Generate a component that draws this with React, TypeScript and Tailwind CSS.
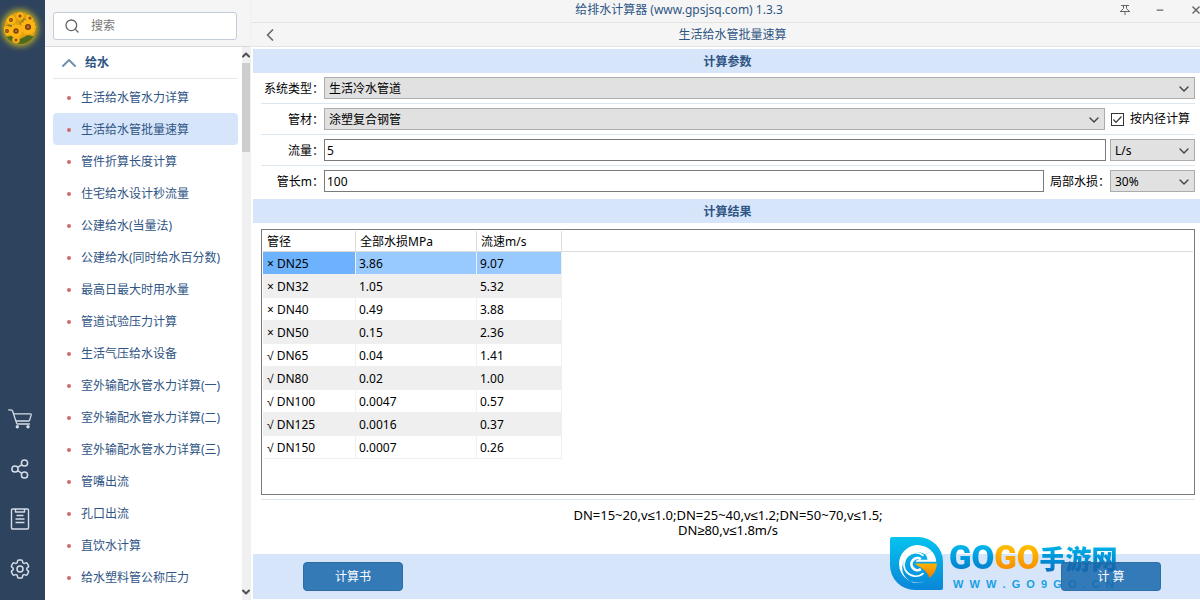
import { useState, type ReactNode } from 'react';
import { ChevronDown, ChevronLeft, ChevronUp, Minus, Search, X } from 'lucide-react';
import { HiOutlineCog6Tooth } from 'react-icons/hi2';
import clsx from 'clsx';

const menuItems = [
  '生活给水管水力详算',
  '生活给水管批量速算',
  '管件折算长度计算',
  '住宅给水设计秒流量',
  '公建给水(当量法)',
  '公建给水(同时给水百分数)',
  '最高日最大时用水量',
  '管道试验压力计算',
  '生活气压给水设备',
  '室外输配水管水力详算(一)',
  '室外输配水管水力详算(二)',
  '室外输配水管水力详算(三)',
  '管嘴出流',
  '孔口出流',
  '直饮水计算',
  '给水塑料管公称压力',
];

const results = [
  { ok: false, dn: 'DN25', loss: '3.86', speed: '9.07' },
  { ok: false, dn: 'DN32', loss: '1.05', speed: '5.32' },
  { ok: false, dn: 'DN40', loss: '0.49', speed: '3.88' },
  { ok: false, dn: 'DN50', loss: '0.15', speed: '2.36' },
  { ok: true, dn: 'DN65', loss: '0.04', speed: '1.41' },
  { ok: true, dn: 'DN80', loss: '0.02', speed: '1.00' },
  { ok: true, dn: 'DN100', loss: '0.0047', speed: '0.57' },
  { ok: true, dn: 'DN125', loss: '0.0016', speed: '0.37' },
  { ok: true, dn: 'DN150', loss: '0.0007', speed: '0.26' },
];

function Sunflower({ x, y, r }: { x: number; y: number; r: number }) {
  return (
    <g transform={`translate(${x} ${y})`}>
      {[0, 30, 60, 90, 120, 150].map((a) => (
        <ellipse key={a} rx={r} ry={r / 3} fill="#fcb514" transform={`rotate(${a})`} />
      ))}
      <circle r={r * 0.38} fill="#7a3f0c" />
      <circle r={r * 0.18} fill="#b8742a" />
    </g>
  );
}

function Avatar() {
  return (
    <div className="size-8 rounded-full shadow-[0_0_6px_2px_#c9b81e]">
      <svg viewBox="0 0 32 32" className="size-8 rounded-full">
        <rect width="32" height="32" fill="#e0a012" />
        <path d="M0 25 L8 24 L16 27 L24 23 L32 25 V32 H0 Z" fill="#4f6a1c" />
        <path d="M12 7 L16 11 L20 6 L24 11 L18 14 Z M2 14 L7 11 L9 15 Z" fill="#8a7a18" />
        <Sunflower x={7} y={8} r={5} />
        <Sunflower x={16} y={4} r={4} />
        <Sunflower x={26} y={6} r={4} />
        <Sunflower x={3} y={19} r={5} />
        <Sunflower x={12} y={19} r={7} />
        <Sunflower x={24} y={15} r={8} />
        <Sunflower x={12} y={28} r={4} />
      </svg>
    </div>
  );
}

function CartIcon() {
  return (
    <svg width="24" height="20" viewBox="0 0 24 20" fill="none" stroke="currentColor" strokeWidth="1.3" strokeLinecap="round" strokeLinejoin="round">
      <path d="M0.7 0.8 L3.6 1.2 Q4.4 1.4 4.7 2.3 L8.6 14.2 Q8.9 15 9.8 15 H21.5 M5.6 4.8 H22.4 Q23.5 4.8 23.2 5.9 L21.6 11.2 Q21.3 12 20.4 12 H8.3" />
      <circle cx="9.3" cy="17.8" r="1.7" fill="currentColor" stroke="none" />
      <circle cx="20" cy="17.8" r="1.7" fill="currentColor" stroke="none" />
    </svg>
  );
}

function ShareIcon() {
  return (
    <svg width="18" height="20" viewBox="0 0 18 20" fill="none" stroke="currentColor" strokeWidth="1.5">
      <circle cx="4" cy="10" r="3.1" />
      <circle cx="13.5" cy="4" r="3.1" />
      <circle cx="13.5" cy="16" r="3.1" />
      <path d="M6.7 8.3 L10.9 5.7 M6.7 11.7 L10.9 14.3" />
    </svg>
  );
}

function ReportIcon() {
  return (
    <svg width="20" height="22" viewBox="0 0 20 22" fill="none" stroke="currentColor" strokeWidth="1.4" strokeLinejoin="round">
      <rect x="1.5" y="1" width="17" height="20" rx="1" />
      <path d="M5.5 1 V4 H14.5 V1 M6.5 7.5 H13.5 M5.5 11 H14.5 M5.5 14.5 H14.5" />
    </svg>
  );
}

function PinIcon() {
  return (
    <svg width="10" height="10" viewBox="0 0 10 10" fill="none" stroke="currentColor">
      <path d="M1 0.5 H9 M3.5 0.5 V3.5 L1 6 M6.5 0.5 V3.5 L9 6 M0 6.5 H10 M5 6.5 V10" />
    </svg>
  );
}

function Rail() {
  return (
    <aside className="flex w-[45px] shrink-0 flex-col justify-between bg-[#2e435e] pt-3 pb-[6px] text-[#d6dde6]">
      <div className="pl-1">
        <Avatar />
      </div>
      <div className="flex w-10 flex-col">
        <button aria-label="购物车" className="flex h-[50px] items-center justify-center"><CartIcon /></button>
        <button aria-label="分享" className="flex h-[50px] items-center justify-center"><ShareIcon /></button>
        <button aria-label="计算书" className="flex h-[50px] items-center justify-center"><ReportIcon /></button>
        <button aria-label="设置" className="flex h-[50px] items-center justify-center"><HiOutlineCog6Tooth className="size-6" /></button>
      </div>
    </aside>
  );
}

function Sidebar() {
  const [active, setActive] = useState(1);

  return (
    <nav className="flex w-[205px] shrink-0 flex-col bg-white text-[#2f5584]">
      <div className="h-[47px] shrink-0 border-b border-[#d9d9d9] bg-[#f5f5f5] pt-3 pr-[13px] pl-2">
        <label className="flex h-7 items-center rounded-[3px] border border-[#c3ccd8] bg-white pl-[10px]">
          <Search className="size-4 text-[#666]" strokeWidth={2} />
          <input type="text" aria-label="搜索" placeholder="搜索" className="ml-[11px] w-24 outline-none placeholder:text-[#777]" />
        </label>
      </div>
      <div className="flex min-h-0 flex-1">
        <div className="min-w-0 flex-1 overflow-hidden pl-2">
          <button className="flex h-8 w-[185px] items-center gap-1 border-b border-[#e8e8e8] pl-1 font-bold">
            <ChevronUp className="size-6 text-[#7391ab]" strokeWidth={2} />
            给水
          </button>
          <ul className="w-[185px] pt-[2px]">
            {menuItems.map((item, i) => (
              <li key={item}>
                <a
                  href="#"
                  onClick={() => setActive(i)}
                  className={clsx('flex h-8 items-center rounded pt-[2px] pl-[14px] whitespace-nowrap', i === active && 'bg-[#d7e5fa]')}
                >
                  <span className="mr-[10px] size-1 rounded-full bg-[#cf6b6b]" />
                  {item}
                </a>
              </li>
            ))}
          </ul>
        </div>
        <div className="flex w-2 shrink-0 flex-col items-center overflow-hidden bg-[#f0f0f0] text-[#505050]">
          <ChevronUp className="h-4 w-3 shrink-0" strokeWidth={4} />
          <div className="h-[89px] w-full bg-[#cdcdcd]" />
          <ChevronDown className="mt-auto h-4 w-3 shrink-0" strokeWidth={4} />
        </div>
      </div>
    </nav>
  );
}

function SelectBox({ id, label, options, className }: { id: string; label?: string; options: string[]; className: string }) {
  return (
    <div className={clsx('relative', className)}>
      <select
        id={id}
        aria-label={label}
        className="block h-[22px] w-full appearance-none border border-[#acacac] bg-[#e1e1e1] pt-[2px] pr-5 pl-1"
      >
        {options.map((o) => (
          <option key={o}>{o}</option>
        ))}
      </select>
      <ChevronDown className="pointer-events-none absolute top-1 right-[3px] size-4 text-[#404040]" strokeWidth={2} />
    </div>
  );
}

function Row({ id, label, last, children }: { id: string; label: string; last?: boolean; children: ReactNode }) {
  return (
    <div className={clsx('flex items-center border-[#dce6ef] py-1', !last && 'border-b')}>
      <label htmlFor={id} className="w-[63px] shrink-0 pt-[2px] text-right">{label}</label>
      {children}
    </div>
  );
}

function Band({ children }: { children: ReactNode }) {
  return (
    <h2 className="ml-[2px] flex h-6 shrink-0 items-center justify-center bg-[#d7e5fa] pt-[2px] pl-[2px] font-bold text-[#2f5584]">
      {children}
    </h2>
  );
}

function Header() {
  return (
    <header className="shrink-0 bg-[#f5f5f5] text-[#2f5584]">
      <div className="flex h-[23px] items-center border-b border-[#e4e4e4]">
        <h1 className="flex-1 pb-[2px] text-center">给排水计算器 (www.gpsjsq.com) 1.3.3</h1>
        <div className="flex w-[93px] gap-[25px] overflow-hidden pb-[3px] pl-[13px] text-[#666]">
          <button aria-label="置顶" className="shrink-0"><PinIcon /></button>
          <button aria-label="最小化" className="shrink-0"><Minus className="size-[10px]" strokeWidth={3} /></button>
          <button aria-label="关闭" className="shrink-0"><X className="size-3" strokeWidth={3} /></button>
        </div>
      </div>
      <div className="flex h-6 items-center border-b border-[#e4e4e4] pr-6">
        <button aria-label="返回" className="w-[38px] pl-[9px]"><ChevronLeft className="size-5 text-[#666]" strokeWidth={2} /></button>
        <p className="flex-1 text-center">生活给水管批量速算</p>
      </div>
    </header>
  );
}

function ResultTable() {
  const [selected, setSelected] = useState(0);

  return (
    <div className="min-h-0 flex-1 overflow-hidden border border-[#7a7a7a] p-px">
      <div className="flex">
        <table className="w-[299px] shrink-0 table-fixed border-separate border-spacing-0 text-left">
          <thead>
            <tr className="h-[21px]">
              <th className="w-[93px] border-r border-b border-[#dcdcdc] px-1 pt-[2px] font-normal">管径</th>
              <th className="w-[121px] border-r border-b border-[#dcdcdc] px-1 pt-[2px] font-normal">全部水损MPa</th>
              <th className="w-[85px] border-r border-b border-[#dcdcdc] px-1 pt-[2px] font-normal">流速m/s</th>
            </tr>
          </thead>
          <tbody>
            {results.map((r, i) => (
              <tr
                key={r.dn}
                onClick={() => setSelected(i)}
                className={clsx('h-[23px]', i === selected ? 'bg-[#98caff]' : i % 2 ? 'bg-[#efefef]' : 'bg-white')}
              >
                <td className={clsx('border-r border-b border-[#f0f0f0] px-1 pt-[2px]', i === selected && 'bg-[#6cb2fd]')}>
                  {r.ok ? '√' : '×'} {r.dn}
                </td>
                <td className="border-r border-b border-[#f0f0f0] pt-[2px] pl-[3px]">{r.loss}</td>
                <td className="border-r border-b border-[#f0f0f0] pt-[2px] pl-[3px]">{r.speed}</td>
              </tr>
            ))}
          </tbody>
        </table>
        <div className="h-[21px] flex-1 border-b border-[#dcdcdc]" />
      </div>
    </div>
  );
}

function Watermark() {
  return (
    <div className="pointer-events-none absolute right-[80px] bottom-[9px] flex items-center gap-[6px]">
      <svg width="53" height="53" viewBox="0 0 158 158">
        <defs>
          <linearGradient id="leaf" x1="0" y1="0" x2="0" y2="1">
            <stop offset="0" stopColor="#06c3ef" />
            <stop offset="1" stopColor="#0a86d8" />
          </linearGradient>
          <linearGradient id="wedge" x1="0" y1="0" x2="0" y2="1">
            <stop offset="0" stopColor="#ffb400" />
            <stop offset="1" stopColor="#f07800" />
          </linearGradient>
        </defs>
        <path d="M6 0 H84 A74 74 0 0 1 158 74 V152 Q158 158 152 158 H74 A74 74 0 0 1 0 84 V6 Q0 0 6 0 Z" fill="url(#leaf)" />
        <path d="M124 42 A56 56 0 1 0 104 132 A46 46 0 1 1 106 52 Z" fill="#fff" />
        <path d="M100 56 A35 35 0 1 0 100 108" fill="none" stroke="#fff" strokeWidth="5" />
        <path d="M92 66 A18 18 0 1 0 92 96" fill="none" stroke="#fff" strokeWidth="8" />
        <path d="M106 52 L124 42 Q136 54 138 74 H76 Q78 68 86 68 H112 Q110 58 106 52 Z" fill="#fff" />
        <path d="M76 79 H140 Q138 106 118 122 Q110 98 76 82 Z" fill="url(#wedge)" />
      </svg>
      <div className="flex w-[171px] flex-col">
        <div className="flex h-10 items-center font-[Roboto,'Liberation_Sans',sans-serif] text-[33px] leading-10 font-black">
          <span className="bg-gradient-to-b from-[#08c8f4] to-[#0a6cc4] bg-clip-text text-transparent">GO</span>
          <span className="bg-gradient-to-b from-[#ffcc00] to-[#f57c00] bg-clip-text text-transparent">GO</span>
          <span className="bg-gradient-to-b from-[#08c8f4] to-[#0a5fb8] bg-clip-text font-['Noto_Sans_CJK_SC',sans-serif] text-[26px] text-transparent">
            手游网
          </span>
        </div>
        <p className="pl-1 font-['Liberation_Sans',sans-serif] text-[11px] leading-3 font-bold whitespace-pre text-[#18a0e4]">
          W  W  W  .  G  O  9  G  O  .  C  N
        </p>
      </div>
    </div>
  );
}

export default function App() {
  const [flow, setFlow] = useState('5');
  const [length, setLength] = useState('100');
  const [byInner, setByInner] = useState(true);

  return (
    <div className="flex h-screen overflow-hidden bg-white font-['Noto_Sans','Liberation_Sans','Noto_Sans_CJK_SC',sans-serif] text-xs text-black">
      <Rail />
      <Sidebar />
      <main className="flex min-w-0 flex-1 flex-col border-l border-[#f0f0f0]">
        <Header />
        <div className="flex min-h-0 flex-1 flex-col pt-[2px]">
          <Band>计算参数</Band>
          <div className="shrink-0 pr-[5px] pb-[3px] pl-[10px]">
            <Row id="system" label="系统类型：">
              <SelectBox id="system" options={['生活冷水管道', '生活热水管道']} className="flex-1" />
            </Row>
            <Row id="material" label="管材：">
              <SelectBox id="material" options={['涂塑复合钢管', '镀锌钢管']} className="flex-1" />
              <label className="ml-[6px] flex w-[84px] items-center gap-[6px] whitespace-nowrap">
                <span className="relative flex size-[13px]">
                  <input
                    type="checkbox"
                    checked={byInner}
                    onChange={(e) => setByInner(e.target.checked)}
                    className="size-[13px] appearance-none border border-[#333] bg-white"
                  />
                  {byInner && (
                    <svg viewBox="0 0 13 13" className="pointer-events-none absolute inset-0" fill="none" stroke="#333" strokeWidth="1.2">
                      <path d="M2.5 6.5 L5 9.3 L10.5 3.5" />
                    </svg>
                  )}
                </span>
                按内径计算
              </label>
            </Row>
            <Row id="flow" label="流量：">
              <input
                id="flow"
                type="text"
                value={flow}
                onChange={(e) => setFlow(e.target.value)}
                className="h-[22px] min-w-0 flex-1 border border-[#7a7a7a] px-[2px] outline-none"
              />
              <SelectBox id="unit" label="流量单位" options={['L/s', 'm³/h']} className="ml-1 w-[85px]" />
            </Row>
            <Row id="length" label="管长m：" last>
              <input
                id="length"
                type="text"
                value={length}
                onChange={(e) => setLength(e.target.value)}
                className="h-[22px] min-w-0 flex-1 border border-[#7a7a7a] px-[2px] outline-none"
              />
              <label htmlFor="local" className="ml-[6px] w-[60px] shrink-0 pt-[2px] whitespace-nowrap">局部水损：</label>
              <SelectBox id="local" options={['30%', '20%', '10%']} className="w-[85px]" />
            </Row>
          </div>
          <Band>计算结果</Band>
          <div className="flex min-h-0 flex-1 flex-col pt-[6px] pr-[5px] pl-[10px]">
            <ResultTable />
            <p className="mt-1 shrink-0 border-t border-[#dce6ef] pt-2 pb-4 text-center text-[13px] leading-[15px]">
              DN=15~20,v≤1.0;DN=25~40,v≤1.2;DN=50~70,v≤1.5;
              <br />
              DN≥80,v≤1.8m/s
            </p>
          </div>
        </div>
        <footer className="relative mb-px ml-[2px] flex h-[45px] shrink-0 items-center justify-between bg-[#d7e5fa] pr-[39px] pl-[50px] text-white">
          <button className="h-[29px] w-[100px] rounded border border-[#2e6da4] bg-[#337ab7]">计算书</button>
          <Watermark />
          <button className="relative h-[29px] w-[100px] rounded border border-[#2e6da4]/85 bg-[#1667ab]/85">计 算</button>
        </footer>
      </main>
    </div>
  );
}
